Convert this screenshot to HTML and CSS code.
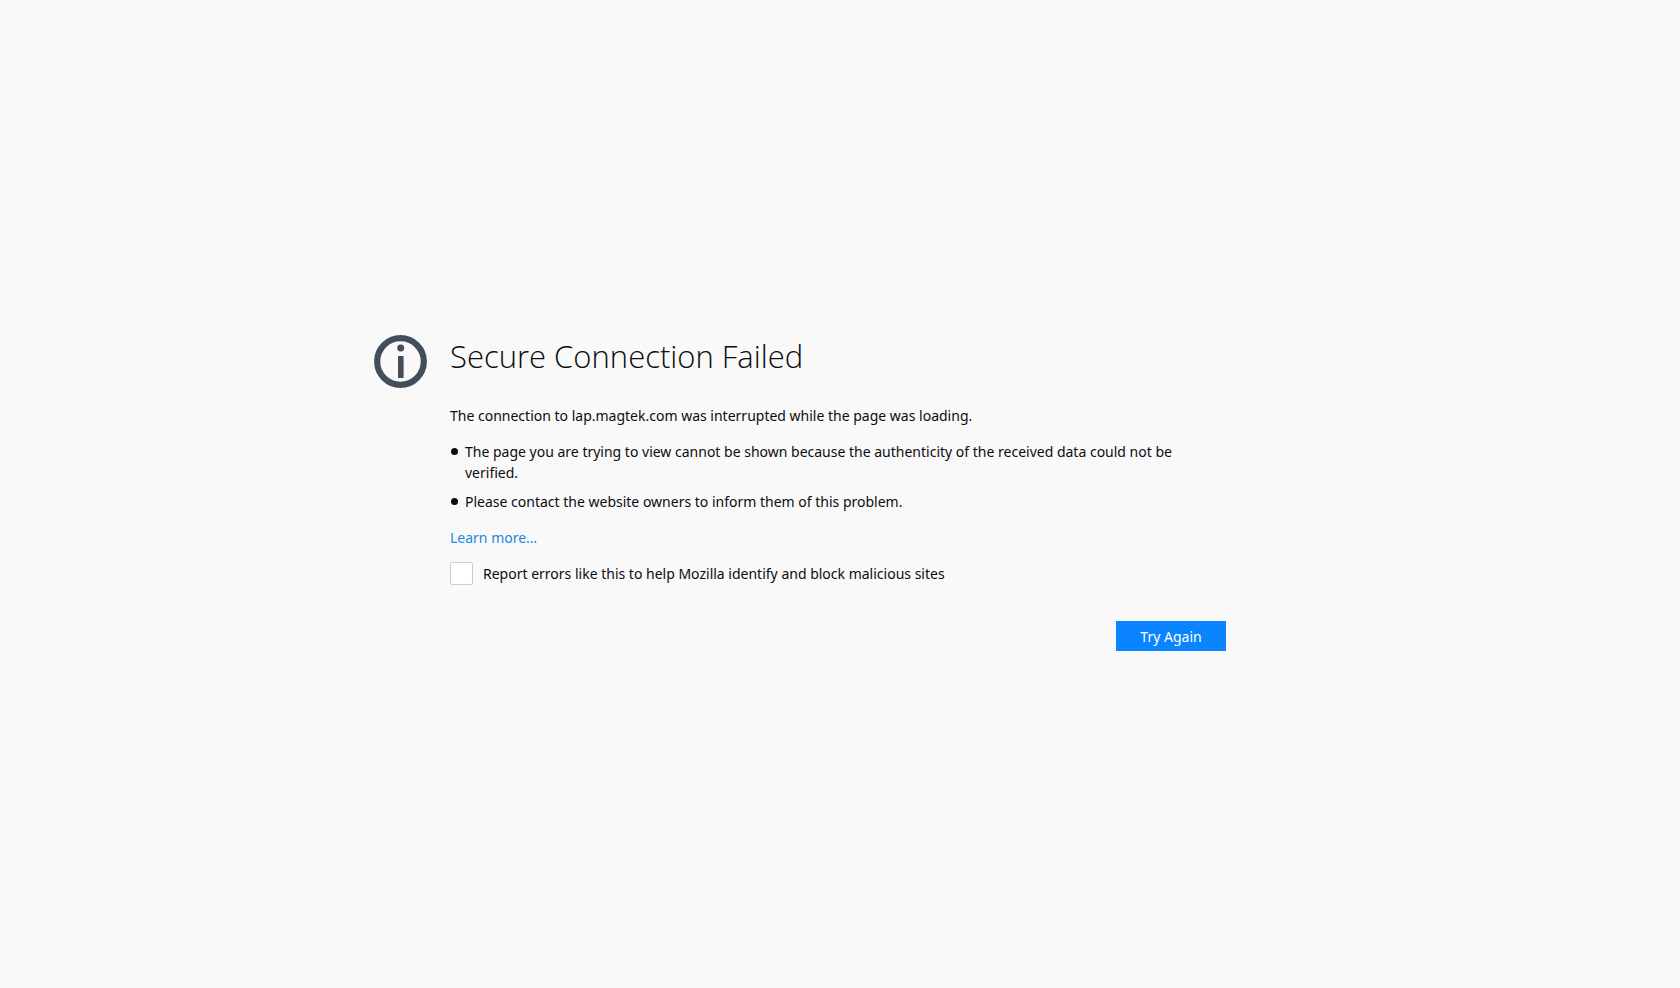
FILE: index.html
```
<!DOCTYPE html>
<html lang="en">
<head>
    <meta charset="UTF-8">
    <meta name="viewport" content="width=device-width, initial-scale=1.0">
    <title>Problem loading page</title>
    <link rel="stylesheet" href="styles.css">
</head>
<body>

<main class="container">
    <div class="title">
        <svg class="title-icon" viewBox="0 0 53 53" aria-hidden="true">
            <circle cx="26.5" cy="26.5" r="23.3" fill="none" stroke="#424f5a" stroke-width="6.2"/>
            <circle cx="26.7" cy="13" r="3.5" fill="#424f5a"/>
            <rect x="24" y="21" width="5.6" height="22" fill="#424f5a"/>
        </svg>
        <h1>Secure Connection Failed</h1>
    </div>

    <p class="description">The connection to lap.magtek.com was interrupted while the page was loading.</p>

    <ul class="details">
        <li>The page you are trying to view cannot be shown because the authenticity of the received data could not be verified.</li>
        <li>Please contact the website owners to inform them of this problem.</li>
    </ul>

    <a class="learn-more" href="#">Learn more…</a>

    <div class="report">
        <input type="checkbox" id="report-errors">
        <label for="report-errors">Report errors like this to help Mozilla identify and block malicious sites</label>
    </div>

    <div class="buttons">
        <button type="button" class="primary">Try Again</button>
    </div>
</main>

</body>
</html>
```
FILE: styles.css
```
* {
    box-sizing: border-box;
}
body {
    display: flex;
    align-items: center;
    justify-content: center;
    min-height: 100vh;
    margin: 0;
    padding: 0 76px;
    background: #f9f9fa;
    color: #0c0c0d;
    font-family: "Segoe UI", "Noto Sans", sans-serif;
    font-size: 14px;
    line-height: 21px;
}
.container {
    width: 100%;
    max-width: 780px;
}
.title {
    display: flex;
    gap: 23px;
    margin-left: -76px;
    margin-bottom: 17px;
}
.title-icon {
    flex: none;
    width: 53px;
    height: 53px;
}
h1 {
    margin: 0;
    font-family: "Segoe UI Light", "Open Sans", sans-serif;
    font-size: 31px;
    font-weight: 300;
    line-height: 42px;
}
.description {
    margin: 0 0 15px;
}
.details {
    margin: 0 0 15px;
    padding: 0 20px 0 0;
    list-style: none;
}
.details li {
    position: relative;
    padding-left: 15px;
}
.details li + li {
    margin-top: 8px;
}
.details li::before {
    content: "";
    position: absolute;
    top: 7px;
    left: 1px;
    width: 7px;
    height: 7px;
    border-radius: 50%;
    background: #0c0c0d;
}
.learn-more {
    display: block;
    width: fit-content;
    color: #2188d9;
    text-decoration: none;
}
.report {
    display: flex;
    align-items: center;
    gap: 10px;
    margin-top: 14px;
}
.report input {
    appearance: none;
    flex: none;
    width: 23px;
    height: 23px;
    margin: 0;
    border: 1px solid #ccc;
    border-radius: 2px;
    background: #fff;
}
.report input:checked {
    background: #0a84ff;
}
.buttons {
    display: flex;
    justify-content: flex-end;
    margin-top: 36px;
    padding: 0 4px 2px 0;
}
.primary {
    min-width: 110px;
    height: 30px;
    padding: 0 20px;
    border: none;
    background: #0a84ff;
    color: #fff;
    font: inherit;
    cursor: pointer;
}
.primary:hover {
    background: #0060df;
}
```
